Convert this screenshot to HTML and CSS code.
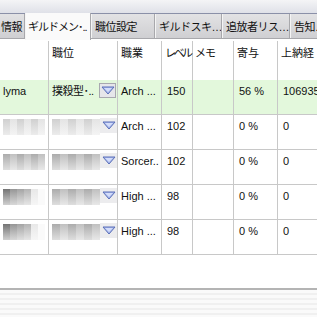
FILE: index.html
```html
<!DOCTYPE html>
<html lang="ja">
<head>
    <meta charset="UTF-8">
    <title>ギルドメンバー</title>
    <link rel="stylesheet" href="styles.css">
</head>
<body>
    <div class="window">
        <div class="topbar"></div>
        <div class="tabs">
            <div class="tab first">情報</div>
            <div class="tab active">ギルドメン･..</div>
            <div class="tab">職位設定</div>
            <div class="tab">ギルドスキ…</div>
            <div class="tab">追放者リス…</div>
            <div class="tab last">告知…</div>
        </div>
        <div class="grid">
            <div class="row head">
                <div class="cell"></div>
                <div class="cell">職位</div>
                <div class="cell">職業</div>
                <div class="cell lvl">レベル</div>
                <div class="cell memo">メモ</div>
                <div class="cell">寄与</div>
                <div class="cell">上納経</div>
            </div>
            <div class="row selected">
                <div class="cell">lyma</div>
                <div class="cell rank"><span class="rank-name">撲殺型･..</span><span class="drop boxed"><svg width="14" height="10" viewBox="0 0 14 10"><path d="M1 1 L13 1 L7 8 Z" fill="#a9b9ec" stroke="#5a6fb8" stroke-width="1"/><path d="M3 2 L11 2 L7 6 Z" fill="#d4ddfa"/></svg></span></div>
                <div class="cell">Arch ...</div>
                <div class="cell num">150</div>
                <div class="cell"></div>
                <div class="cell num">56 %</div>
                <div class="cell num">106935</div>
            </div>
            <div class="row">
                <div class="cell"><div class="mosaic m-light"><i></i><i></i><i></i><i></i><i></i><i></i></div></div>
                <div class="cell rank"><div class="mosaic m-light wide"><i></i><i></i><i></i><i></i><i></i><i></i></div><span class="drop"><svg width="14" height="10" viewBox="0 0 14 10"><path d="M1 1 L13 1 L7 8 Z" fill="#a9b9ec" stroke="#5a6fb8" stroke-width="1"/><path d="M3 2 L11 2 L7 6 Z" fill="#d4ddfa"/></svg></span></div>
                <div class="cell">Arch ...</div>
                <div class="cell num">102</div>
                <div class="cell"></div>
                <div class="cell num">0 %</div>
                <div class="cell num">0</div>
            </div>
            <div class="row">
                <div class="cell"><div class="mosaic m-mid"><i></i><i></i><i></i><i></i><i></i><i></i></div></div>
                <div class="cell rank"><div class="mosaic m-mid wide"><i></i><i></i><i></i><i></i><i></i><i></i></div><span class="drop"><svg width="14" height="10" viewBox="0 0 14 10"><path d="M1 1 L13 1 L7 8 Z" fill="#a9b9ec" stroke="#5a6fb8" stroke-width="1"/><path d="M3 2 L11 2 L7 6 Z" fill="#d4ddfa"/></svg></span></div>
                <div class="cell">Sorcer..</div>
                <div class="cell num">102</div>
                <div class="cell"></div>
                <div class="cell num">0 %</div>
                <div class="cell num">0</div>
            </div>
            <div class="row">
                <div class="cell"><div class="mosaic m-dark"><i></i><i></i><i></i><i></i><i></i><i></i></div></div>
                <div class="cell rank"><div class="mosaic m-mid wide"><i></i><i></i><i></i><i></i><i></i><i></i></div><span class="drop"><svg width="14" height="10" viewBox="0 0 14 10"><path d="M1 1 L13 1 L7 8 Z" fill="#a9b9ec" stroke="#5a6fb8" stroke-width="1"/><path d="M3 2 L11 2 L7 6 Z" fill="#d4ddfa"/></svg></span></div>
                <div class="cell">High ...</div>
                <div class="cell num">98</div>
                <div class="cell"></div>
                <div class="cell num">0 %</div>
                <div class="cell num">0</div>
            </div>
            <div class="row">
                <div class="cell"><div class="mosaic m-dark"><i></i><i></i><i></i><i></i><i></i><i></i></div></div>
                <div class="cell rank"><div class="mosaic m-mid wide"><i></i><i></i><i></i><i></i><i></i><i></i></div><span class="drop"><svg width="14" height="10" viewBox="0 0 14 10"><path d="M1 1 L13 1 L7 8 Z" fill="#a9b9ec" stroke="#5a6fb8" stroke-width="1"/><path d="M3 2 L11 2 L7 6 Z" fill="#d4ddfa"/></svg></span></div>
                <div class="cell">High ...</div>
                <div class="cell num">98</div>
                <div class="cell"></div>
                <div class="cell num">0 %</div>
                <div class="cell num">0</div>
            </div>
        </div>
        <div class="footer"></div>
    </div>
</body>
</html>
```

FILE: styles.css
```css
body {
    margin: 0;
    background: #fff;
    font-family: "Liberation Sans", "Noto Sans CJK JP", sans-serif;
    font-size: 11px;
    color: #111;
}
.window {
    width: 317px;
    height: 317px;
    overflow: hidden;
    display: flex;
    flex-direction: column;
}
.topbar {
    height: 13px;
    background: linear-gradient(#f4f4f6, #dfe1e8);
    border-bottom: 1px solid #8a90a8;
}
.tabs {
    display: flex;
    height: 24px;
    background: #d4d4d6;
    border-bottom: 1px solid #a8a8ac;
    white-space: nowrap;
    letter-spacing: -0.5px;
}
.tab {
    flex: none;
    line-height: 26px;
    padding: 0 2px 0 3px;
    overflow: hidden;
    box-sizing: border-box;
    border-right: 1px solid #a8a8ac;
    border-left: 1px solid #f4f4f4;
    background: linear-gradient(#e2e2e4, #cfcfd2);
}
.tab.first {
    width: 25px;
    padding: 0 0 0 1px;
    border-left: none;
}
.tab.active {
    width: 66px;
    background: #fafafa;
    height: 27px;
    margin-top: -1px;
    line-height: 28px;
    padding: 0 0 0 2px;
    letter-spacing: -1px;
}
.tab:nth-child(3) { width: 64px; }
.tab:nth-child(4) { width: 67px; }
.tab:nth-child(5) { width: 68px; }
.tab.last { flex: 1; border-right: none; }
.grid {
    display: flex;
    flex-direction: column;
}
.row {
    display: grid;
    grid-template-columns: 49px 69px 44px 31px 41px 44px 60px;
    height: 35px;
    border-bottom: 1px solid #c8c8c8;
    box-sizing: border-box;
}
.row.head {
    height: 39px;
    margin-top: 2px;
    border-bottom: none;
}
.row.head .cell {
    padding-top: 4px;
}
.row.selected {
    background: #e3f8dc;
}
.cell {
    border-right: 1px solid #c8c8c8;
    padding: 3px 0 0 3px;
    line-height: 16px;
    white-space: nowrap;
    overflow: hidden;
    box-sizing: border-box;
}
.cell:last-child {
    border-right: none;
}
.cell.num {
    padding-left: 5px;
}
.row.head .cell.lvl {
    padding-left: 3px;
    letter-spacing: -2.5px;
    overflow: visible;
}
.row.head .cell.memo {
    padding-left: 2px;
    letter-spacing: -1px;
}
.rank {
    display: flex;
    align-items: flex-start;
}
.rank-name {
    width: 50px;
    letter-spacing: -0.5px;
    overflow: hidden;
}
.drop {
    width: 17px;
    height: 15px;
    flex: none;
    display: flex;
    align-items: center;
    justify-content: center;
    background: #ececee;
    margin-left: auto;
    margin-right: 1px;
    box-sizing: border-box;
}
.drop.boxed {
    border: 1px solid #a8a8b0;
    background: #e6e6ea;
}
.mosaic {
    display: grid;
    grid-template-columns: repeat(6, 7px);
    margin-top: 1px;
}
.mosaic.wide {
    grid-template-columns: repeat(6, 8px);
    width: 48px;
}
.mosaic i {
    display: block;
    height: 16px;
}
.m-light i:nth-child(odd) { background: linear-gradient(#d0d0d0, #ececec); }
.m-light i:nth-child(even) { background: linear-gradient(#e4e4e4, #f4f4f4); }
.m-mid i:nth-child(odd) { background: linear-gradient(#acacac, #dedede); }
.m-mid i:nth-child(even) { background: linear-gradient(#c0c0c0, #e8e8e8); }
.m-dark i:nth-child(1) { background: linear-gradient(#747474, #d0d0d0); }
.m-dark i:nth-child(2) { background: linear-gradient(#969696, #d8d8d8); }
.m-dark i:nth-child(3) { background: linear-gradient(#a4a4a4, #e0e0e0); }
.m-dark i:nth-child(4) { background: linear-gradient(#b4b4b4, #e6e6e6); }
.m-dark i:nth-child(5) { background: linear-gradient(#e8e8e8, #f6f6f6); }
.m-dark i:nth-child(6) { background: #fafafa; }
.footer {
    margin-top: 33px;
    flex: 1;
    border-top: 2px solid #b4b4b4;
    background: repeating-linear-gradient(#fafafa 0, #fafafa 3px, #f0f0f0 3px, #f0f0f0 5px);
}
```
